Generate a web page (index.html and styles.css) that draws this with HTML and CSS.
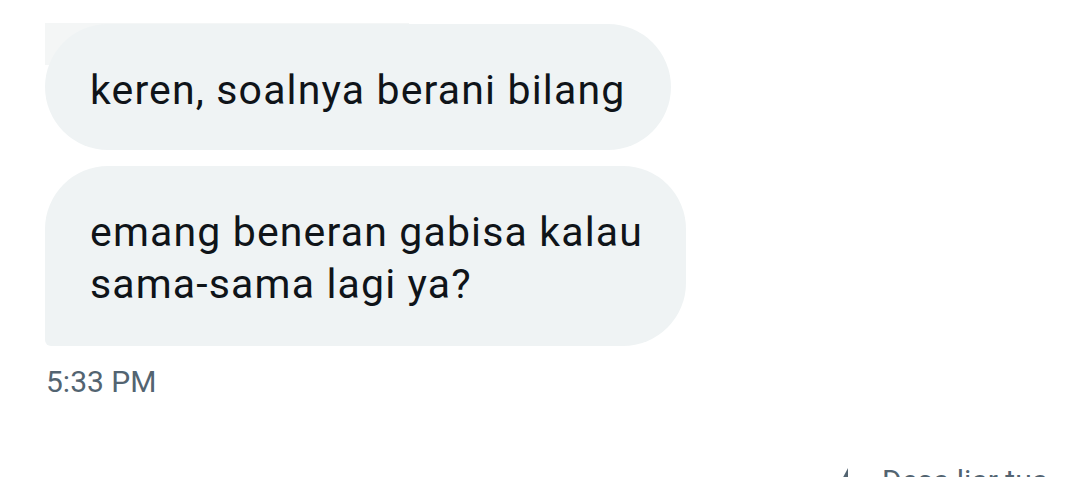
FILE: index.html
```html
<!DOCTYPE html>
<html lang="id">
<head>
<meta charset="utf-8">
<title>Pesan</title>
<link rel="stylesheet" href="styles.css">
</head>
<body>
  <main class="thread">
    <div class="group">
      <div class="bubble bubble-first">keren, soalnya berani bilang</div>
      <div class="bubble bubble-last">emang beneran gabisa kalau sama-sama lagi ya?</div>
    </div>
    <div class="time">5:33 PM</div>
    <div class="footer">
      <svg class="footer-icon" width="24" height="20" viewBox="0 0 24 20"><path d="M12 1 L12 20 L2 20 Z" fill="#536471"/></svg>
      <span class="footer-text">Desa liar tua</span>
    </div>
  </main>
</body>
</html>
```

FILE: styles.css
```css
html, body {
  margin: 0;
  padding: 0;
  background: #ffffff;
  overflow: hidden;
}
body {
  width: 1080px;
  height: 477px;
  font-family: Roboto, "Noto Sans", "Liberation Sans", sans-serif;
}
.thread {
  padding: 24px 0 0 45px;
  display: flex;
  flex-direction: column;
}
.group {
  display: flex;
  flex-direction: column;
  align-items: flex-start;
  gap: 16px;
  isolation: isolate;
}
.bubble {
  position: relative;
  background: #eff3f4;
  color: #0f1419;
  font-size: 41px;
  line-height: 52px;
  letter-spacing: 1.15px;
  padding: 40px 46px 34px 45px;
  border-radius: 63px;
  max-width: 556px;
}
.bubble-first::before {
  content: "";
  position: absolute;
  left: 0;
  top: -1px;
  width: 364px;
  height: 42px;
  background: #f4f6f6;
  z-index: -1;
}
.bubble-last {
  padding-right: 40px;
  padding-bottom: 36px;
  border-bottom-left-radius: 6px;
}
.time {
  margin-top: 18px;
  font-size: 30px;
  line-height: 35px;
  color: #536471;
  padding-left: 1px;
}
.footer {
  margin-top: 68px;
  align-self: flex-end;
  display: flex;
  align-items: flex-start;
  gap: 22px;
  margin-right: 32px;
  height: 20px;
}
.footer-text {
  font-size: 30px;
  line-height: 35px;
  color: #536471;
  margin-top: -4px;
}
```
